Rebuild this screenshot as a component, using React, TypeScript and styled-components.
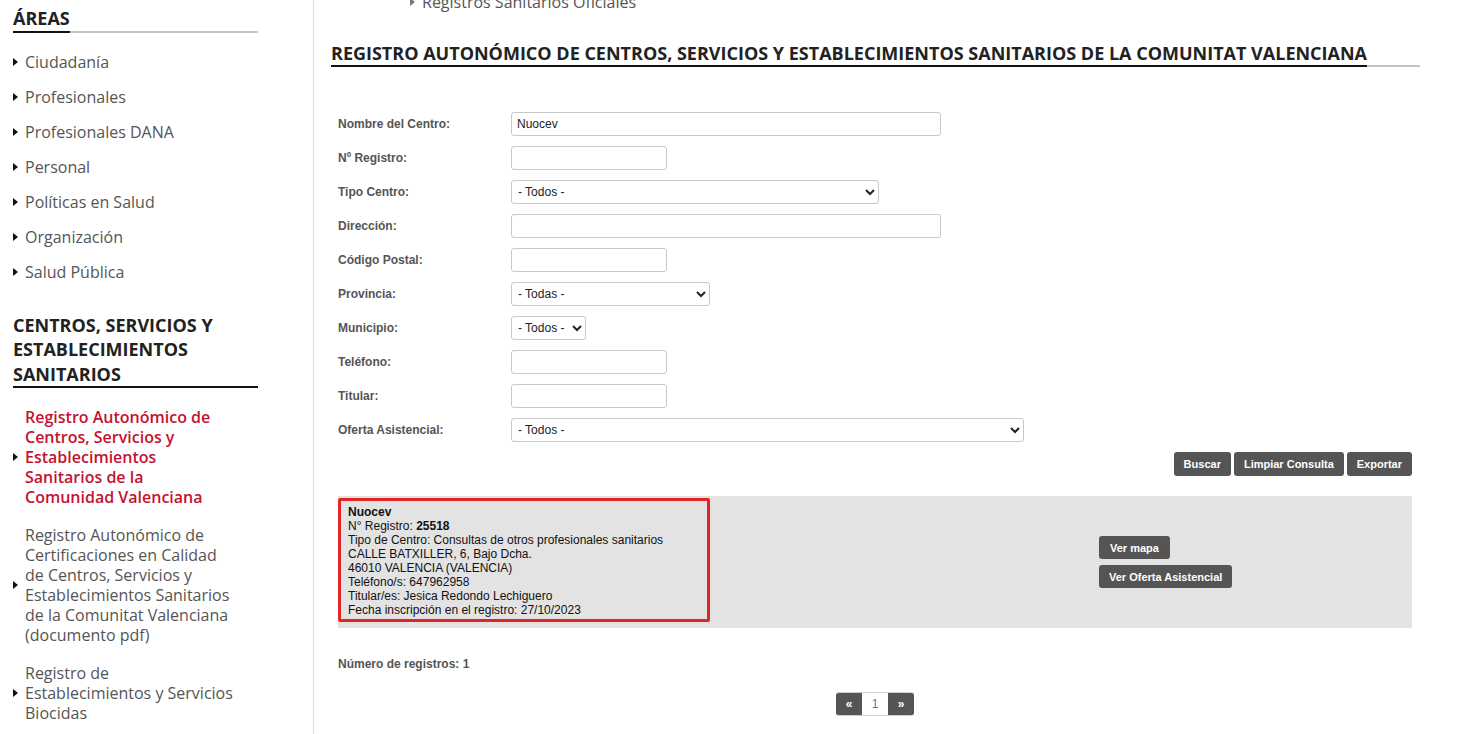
import React from 'react'
import styled, { createGlobalStyle } from 'styled-components'

const GlobalStyle = createGlobalStyle`
  * { box-sizing: border-box; }
  body {
    margin: 0;
    background: #fff;
    font-family: 'Open Sans', sans-serif;
    overflow: hidden;
  }
`

const Page = styled.div`
  display: flex;
  min-height: 100vh;
`

const Sidebar = styled.aside`
  width: 314px;
  flex-shrink: 0;
  border-right: 1px solid #dcdcdc;
  padding: 6px 0 0 13px;
`

const SideBlock = styled.div`
  width: 245px;
`

const SideTitle = styled.h2<{ $dark?: boolean }>`
  margin: 0;
  font: 700 18px/24.5px 'Open Sans', sans-serif;
  color: #222;
  border-bottom: 2px solid ${p => (p.$dark ? '#111' : '#c4c4c4')};
  span {
    display: inline-block;
    border-bottom: 2px solid #111;
    margin-bottom: -2px;
  }
`

const NavList = styled.ul<{ $top: number; $gap: number }>`
  list-style: none;
  margin: ${p => p.$top}px 0 0;
  padding: 0;
  display: flex;
  flex-direction: column;
  gap: ${p => p.$gap}px;
`

const NavItem = styled.li`
  display: flex;
  align-items: center;
`

const Bullet = styled.span<{ $color?: string }>`
  width: 0;
  height: 0;
  flex-shrink: 0;
  border-top: 4px solid transparent;
  border-bottom: 4px solid transparent;
  border-left: 5px solid ${p => p.$color || '#111'};
  margin-right: 7px;
`

const NavText = styled.span<{ $active?: boolean }>`
  width: 210px;
  font: ${p => (p.$active ? 600 : 400)} 16px/20px 'Open Sans', sans-serif;
  color: ${p => (p.$active ? '#c41230' : '#555')};
`

const Main = styled.main`
  flex: 1;
  padding: 0 48px 0 17px;
`

const Crumb = styled.div`
  margin-top: -8px;
  padding-left: 79px;
  display: flex;
  align-items: center;
  font: 400 16px/20px 'Open Sans', sans-serif;
  color: #555;
`

const PageTitle = styled.h1`
  margin: 29px 0 0;
  font: 700 18px/24px 'Open Sans', sans-serif;
  color: #222;
  border-bottom: 2px solid #c4c4c4;
  span {
    display: inline-block;
    border-bottom: 2px solid #111;
    margin-bottom: -2px;
  }
`

const Form = styled.form`
  margin-top: 45px;
  padding: 0 8px 0 7px;
  font-family: 'Liberation Sans', Arial, sans-serif;
`

const FormRow = styled.div`
  display: grid;
  grid-template-columns: 173px 1fr;
  align-items: center;
  height: 24px;
  margin-bottom: 10px;
`

const Label = styled.label`
  font: 700 12px/14px 'Liberation Sans', Arial, sans-serif;
  color: #555;
`

const TextInput = styled.input<{ $w: number }>`
  width: ${p => p.$w}px;
  height: 24px;
  border: 1px solid #c8c8c8;
  border-radius: 3px;
  padding: 0 5px;
  font: 400 12px 'Liberation Sans', Arial, sans-serif;
  color: #222;
  background: #fff;
  outline: none;
`

const Select = styled.select<{ $w: number }>`
  width: ${p => p.$w}px;
  height: 24px;
  border: 1px solid #c8c8c8;
  border-radius: 3px;
  padding: 0 2px;
  font: 400 12px 'Liberation Sans', Arial, sans-serif;
  color: #222;
  background: #fff;
  outline: none;
`

const Actions = styled.div`
  display: flex;
  justify-content: flex-end;
  gap: 3px;
`

const Button = styled.button<{ $h?: number; $pad?: number }>`
  height: ${p => p.$h || 24}px;
  padding: 0 ${p => p.$pad || 10}px;
  border: none;
  border-radius: 3px;
  background: #555;
  color: #fff;
  font: 700 11px 'Liberation Sans', Arial, sans-serif;
  cursor: pointer;
`

const ResultRow = styled.div`
  margin-top: 20px;
  height: 132px;
  padding-top: 2px;
  display: grid;
  grid-template-columns: 761px 1fr;
  background: #e3e3e3;
`

const InfoBox = styled.div`
  width: 372px;
  height: 124px;
  border: 3px solid #e32424;
  border-radius: 2px;
  padding: 4px 7px;
  font: 400 12px/14px 'Liberation Sans', Arial, sans-serif;
  color: #111;
  b { font-weight: 700; }
`

const ResultActions = styled.div`
  display: flex;
  flex-direction: column;
  align-items: flex-start;
  justify-content: center;
  gap: 6px;
  padding-bottom: 2px;
`

const Count = styled.p`
  margin: 29px 0 0;
  font: 700 12px/14px 'Liberation Sans', Arial, sans-serif;
  color: #555;
`

const PagerWrap = styled.div`
  margin-top: 21px;
  display: flex;
  justify-content: center;
`

const Pager = styled.div`
  display: flex;
  border-radius: 3px;
  overflow: hidden;
  border-top: 1px solid #cfcfcf;
  border-bottom: 1px solid #cfcfcf;
`

const PageCell = styled.span<{ $dark?: boolean }>`
  width: 26px;
  height: 22px;
  display: flex;
  align-items: center;
  justify-content: center;
  background: ${p => (p.$dark ? '#555' : '#fff')};
  color: ${p => (p.$dark ? '#fff' : '#6a7a8c')};
  font: ${p => (p.$dark ? 700 : 400)} 12px 'Liberation Sans', Arial, sans-serif;
`

const areas = [
  'Ciudadanía',
  'Profesionales',
  'Profesionales DANA',
  'Personal',
  'Políticas en Salud',
  'Organización',
  'Salud Pública'
]

const links = [
  { text: 'Registro Autonómico de Centros, Servicios y Establecimientos Sanitarios de la Comunidad Valenciana', active: true },
  { text: 'Registro Autonómico de Certificaciones en Calidad de Centros, Servicios y Establecimientos Sanitarios de la Comunitat Valenciana (documento pdf)' },
  { text: 'Registro de Establecimientos y Servicios Biocidas' }
]

const App = () => {
  return (
    <Page>
      <GlobalStyle />
      <Sidebar>
        <SideBlock>
          <SideTitle><span>ÁREAS</span></SideTitle>
          <NavList $top={19} $gap={15}>
            {areas.map(area => (
              <NavItem key={area}>
                <Bullet />
                <NavText>{area}</NavText>
              </NavItem>
            ))}
          </NavList>
          <SideTitle $dark style={{ marginTop: 31 }}>
            CENTROS, SERVICIOS Y ESTABLECIMIENTOS SANITARIOS
          </SideTitle>
          <NavList $top={19} $gap={18}>
            {links.map(link => (
              <NavItem key={link.text}>
                <Bullet />
                <NavText $active={link.active}>{link.text}</NavText>
              </NavItem>
            ))}
          </NavList>
        </SideBlock>
      </Sidebar>

      <Main>
        <Crumb>
          <Bullet $color='#777' />
          Registros Sanitarios Oficiales
        </Crumb>
        <PageTitle>
          <span>REGISTRO AUTONÓMICO DE CENTROS, SERVICIOS Y ESTABLECIMIENTOS SANITARIOS DE LA COMUNITAT VALENCIANA</span>
        </PageTitle>

        <Form onSubmit={e => e.preventDefault()}>
          <FormRow>
            <Label>Nombre del Centro:</Label>
            <TextInput $w={430} defaultValue='Nuocev' />
          </FormRow>
          <FormRow>
            <Label>Nº Registro:</Label>
            <TextInput $w={156} />
          </FormRow>
          <FormRow>
            <Label>Tipo Centro:</Label>
            <Select $w={368}><option>- Todos -</option></Select>
          </FormRow>
          <FormRow>
            <Label>Dirección:</Label>
            <TextInput $w={430} />
          </FormRow>
          <FormRow>
            <Label>Código Postal:</Label>
            <TextInput $w={156} />
          </FormRow>
          <FormRow>
            <Label>Provincia:</Label>
            <Select $w={199}><option>- Todas -</option></Select>
          </FormRow>
          <FormRow>
            <Label>Municipio:</Label>
            <Select $w={75}><option>- Todos -</option></Select>
          </FormRow>
          <FormRow>
            <Label>Teléfono:</Label>
            <TextInput $w={156} />
          </FormRow>
          <FormRow>
            <Label>Titular:</Label>
            <TextInput $w={156} />
          </FormRow>
          <FormRow>
            <Label>Oferta Asistencial:</Label>
            <Select $w={513}><option>- Todos -</option></Select>
          </FormRow>

          <Actions>
            <Button type='button'>Buscar</Button>
            <Button type='button'>Limpiar Consulta</Button>
            <Button type='button'>Exportar</Button>
          </Actions>

          <ResultRow>
            <div>
              <InfoBox>
                <b>Nuocev</b><br />
                N° Registro: <b>25518</b><br />
                Tipo de Centro: Consultas de otros profesionales sanitarios<br />
                CALLE BATXILLER, 6, Bajo Dcha.<br />
                46010 VALENCIA (VALENCIA)<br />
                Teléfono/s: 647962958<br />
                Titular/es: Jesica Redondo Lechiguero<br />
                Fecha inscripción en el registro: 27/10/2023
              </InfoBox>
            </div>
            <ResultActions>
              <Button type='button' $h={23} $pad={11}>Ver mapa</Button>
              <Button type='button' $h={23} $pad={10}>Ver Oferta Asistencial</Button>
            </ResultActions>
          </ResultRow>

          <Count>Número de registros: 1</Count>

          <PagerWrap>
            <Pager>
              <PageCell $dark>«</PageCell>
              <PageCell>1</PageCell>
              <PageCell $dark>»</PageCell>
            </Pager>
          </PagerWrap>
        </Form>
      </Main>
    </Page>
  )
}

export default App
